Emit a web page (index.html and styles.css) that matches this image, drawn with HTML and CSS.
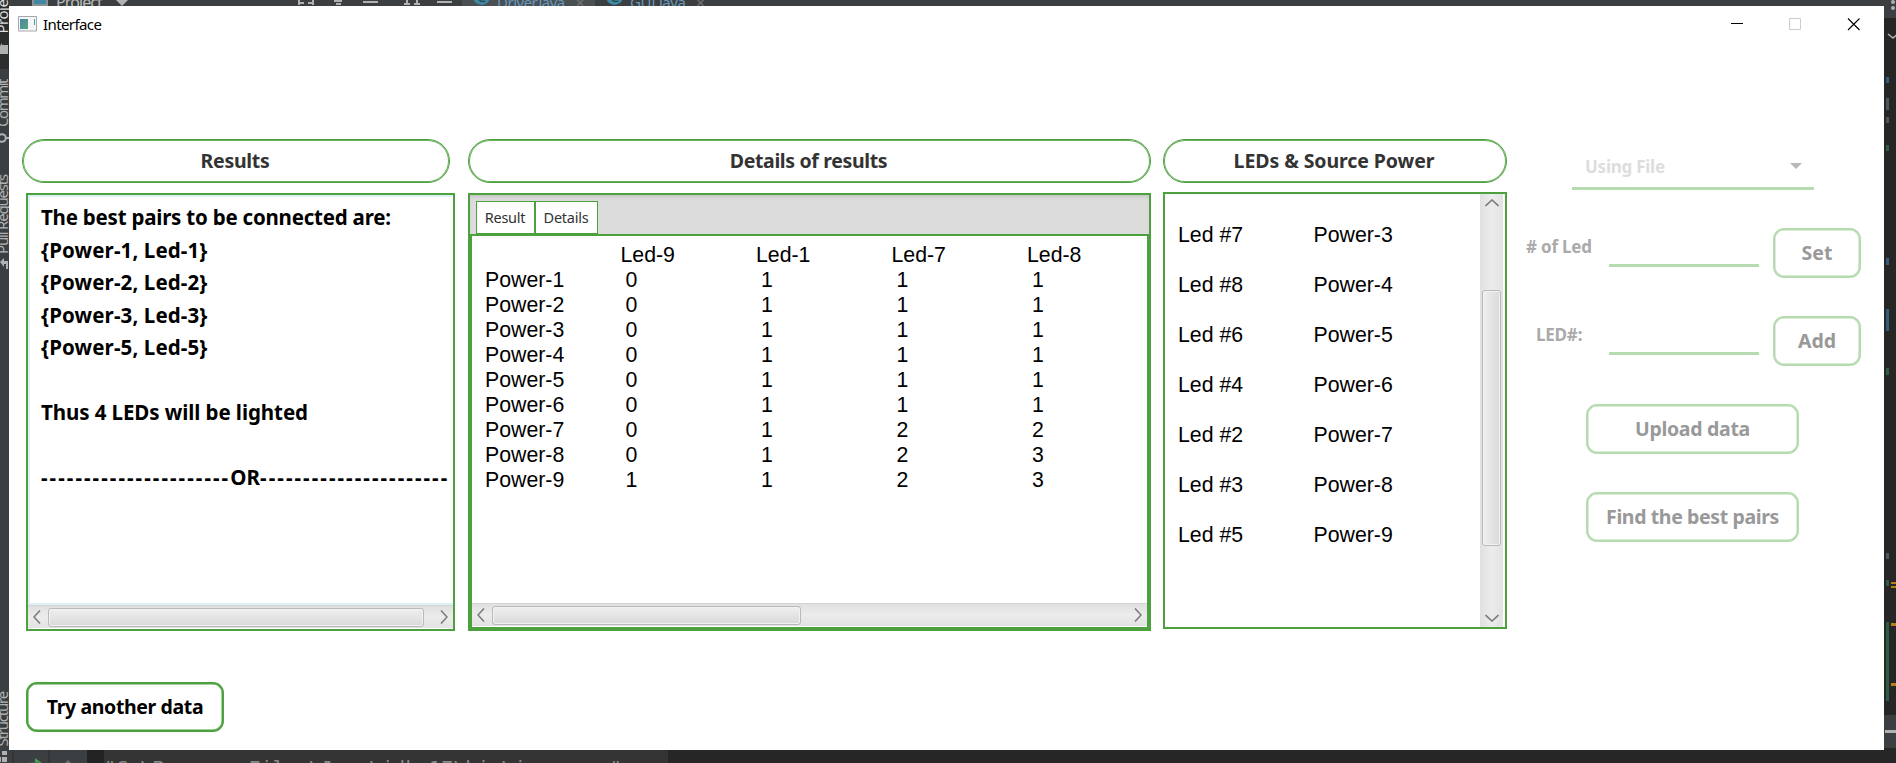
FILE: index.html
```html
<!DOCTYPE html>
<html lang="en">
<head>
<meta charset="utf-8">
<title>Interface</title>
<link rel="stylesheet" href="styles.css">
</head>
<body>
<div class="ide">
  <div class="ide-top">
    <svg class="ide-folder" width="17" height="6" viewBox="0 0 17 6"><path d="M0 0h16v6H0z" fill="#8b9296"/><path d="M2 0h12v4H2z" fill="#3f87a3"/></svg>
    <span class="ide-label project">Project</span>
    <svg width="357" height="6" viewBox="0 0 357 6" class="ide-tools">
      <path d="M11 0h12l-6 6z" fill="#afb1b3"/>
      <path d="M193 3h6M194 0v5M203 3h6M208 0v5M229 1h8M231 4h5M258 2h15M302 0v5M312 0v5M299 4h6M309 4h6M332 2h15" stroke="#afb1b3" stroke-width="2" fill="none"/>
    </svg>
    <div class="ide-tabs">
      <div class="ide-tab active"><i class="dot">C</i><span>Driver.java</span><b>×</b></div>
      <div class="ide-tab"><i class="dot">C</i><span>GUI.java</span><b>×</b></div>
    </div>
  </div>
  <div class="ide-left">
    <span class="v v1">Project</span>
    <span class="v v2">Commit</span>
    <span class="v v3">Pull Requests</span>
    <span class="v v4">Structure</span>
    <svg class="rail" width="9" height="763" viewBox="0 0 9 763">
      <path d="M0 46l2-3v2h6v9H0z" fill="#afb1b3"/>
      <circle cx="2" cy="138" r="3.800" fill="none" stroke="#afb1b3" stroke-width="2"/><path d="M6 138h3" stroke="#afb1b3" stroke-width="2"/>
      <path d="M0 262l4-4v3h4v8H6v-5H4v3z" fill="#afb1b3"/>
    </svg>
  </div>
  <svg class="ide-right" width="12" height="763" viewBox="0 0 12 763">
    <path d="M0 0h12v18H0z" fill="#3c3f41"/>
    <circle cx="9" cy="2" r="2" fill="#afb1b3"/><circle cx="9" cy="8" r="2" fill="#afb1b3"/>
    <path d="M4 34l5 4 5-4" stroke="#afb1b3" stroke-width="1.600" fill="none"/>
    <path d="M2 77h3v6H2zM2 258h3v7H2zM2 309h3v22H2z" fill="#375a7f"/>
    <path d="M2 98h3v12H2zM2 117h3v6H2zM2 553h3v6H2z" fill="#4d565e"/>
    <path d="M2 145h3v6H2zM2 368h3v7H2zM2 580h3v6H2zM2 622h3v79H2z" fill="#315a42"/>
    <path d="M7 582h5v2H7zM7 586h5v2H7zM7 623h5v3H7zM7 683h5v3H7z" fill="#b58016"/>
    <path d="M0 715h12v33H0z" fill="#3c3f41"/><path d="M1 730h11v3H1z" fill="#afb1b3"/>
  </svg>
  <div class="ide-bottom">
    <svg width="104" height="13" viewBox="0 0 104 13"><path d="M0 0h104v13H0z" fill="#3c3f41"/><path d="M13 0v13M49 0v13" stroke="#2b2b2b"/><path d="M2 1h5v4H2zM2 7h5v5H2zM0 7h1v5H0z" fill="#afb1b3"/><path d="M28 12h7V8l7 5z" fill="#499c54"/><path d="M65 13l3-3 3 3z" fill="#6e7072"/><path d="M87 0h17v13H87z" fill="#232323"/></svg>
    <span class="console">"C:\Program Files\Java\jdk-17\bin\java.exe"</span>
  </div>
</div>

<main class="window">
  <header class="titlebar">
    <svg width="19" height="16" viewBox="0 0 19 16"><path d="M.5.5h18v14.500H.5z" fill="#f4f5f6" stroke="#a3a8ac"/><defs><linearGradient id="g" x2="1" y2="1"><stop stop-color="#4c86a4"/><stop offset="1" stop-color="#56a77b"/></linearGradient></defs><path d="M2 3h8v10H2z" fill="url(#g)"/><path d="M16 3h1v6h-1z" fill="#4aa392"/></svg>
    <span class="title">Interface</span>
    <svg class="winbtns" width="130" height="13" viewBox="0 0 130 13"><path d="M0 5.500h12" stroke="#000"/><path d="M58.500.5h11v11h-11z" fill="none" stroke="#ccc"/><path d="M117 .5l11.500 11.500M128.500 .5L117 12" stroke="#000" stroke-width="1.100"/></svg>
  </header>

  <div class="content">
    <section class="col results">
      <h2 class="pill"><span class="t-res">Results</span></h2>
      <div class="box result-box">
        <div class="text-area"><p class="l1">The best pairs to be connected are:</p><p>{Power-1, Led-1}</p><p>{Power-2, Led-2}</p><p>{Power-3, Led-3}</p><p>{Power-5, Led-5}</p><p>&nbsp;</p><p class="l2">Thus 4 LEDs will be lighted</p><p>&nbsp;</p><p class="or"><span>----------------------</span>OR<span>----------------------</span></p></div>
        <div class="hbar"><svg width="8" height="14" viewBox="0 0 8 14"><path d="M7 .5L1 7l6 6.500"/></svg><i class="thumb wide"></i><svg class="end" width="8" height="14" viewBox="0 0 8 14"><path d="M1 .5L7 7l-6 6.500"/></svg></div>
      </div>
    </section>

    <section class="col details">
      <h2 class="pill"><span class="t-det">Details of results</span></h2>
      <div class="box tab-box">
        <nav class="tabs"><span class="tab"><span>Result</span></span><span class="tab second"><span>Details</span></span></nav>
        <div class="pane">
          <div class="matrix">
            <div class="row head"><span></span><span>Led-9</span><span>Led-1</span><span>Led-7</span><span>Led-8</span></div>
            <div class="row"><span>Power-1</span><span>0</span><span>1</span><span>1</span><span>1</span></div>
            <div class="row"><span>Power-2</span><span>0</span><span>1</span><span>1</span><span>1</span></div>
            <div class="row"><span>Power-3</span><span>0</span><span>1</span><span>1</span><span>1</span></div>
            <div class="row"><span>Power-4</span><span>0</span><span>1</span><span>1</span><span>1</span></div>
            <div class="row"><span>Power-5</span><span>0</span><span>1</span><span>1</span><span>1</span></div>
            <div class="row"><span>Power-6</span><span>0</span><span>1</span><span>1</span><span>1</span></div>
            <div class="row"><span>Power-7</span><span>0</span><span>1</span><span>2</span><span>2</span></div>
            <div class="row"><span>Power-8</span><span>0</span><span>1</span><span>2</span><span>3</span></div>
            <div class="row"><span>Power-9</span><span>1</span><span>1</span><span>2</span><span>3</span></div>
          </div>
          <div class="hbar"><svg width="8" height="14" viewBox="0 0 8 14"><path d="M7 .5L1 7l6 6.500"/></svg><i class="thumb mid"></i><svg class="end" width="8" height="14" viewBox="0 0 8 14"><path d="M1 .5L7 7l-6 6.500"/></svg></div>
        </div>
      </div>
    </section>

    <section class="col leds">
      <h2 class="pill"><span class="t-led">LEDs &amp; Source Power</span></h2>
      <div class="box led-box">
        <div class="pairs">
          <div><span>Led #7</span><span>Power-3</span></div>
          <div><span>Led #8</span><span>Power-4</span></div>
          <div><span>Led #6</span><span>Power-5</span></div>
          <div><span>Led #4</span><span>Power-6</span></div>
          <div><span>Led #2</span><span>Power-7</span></div>
          <div><span>Led #3</span><span>Power-8</span></div>
          <div><span>Led #5</span><span>Power-9</span></div>
        </div>
        <div class="vbar"><svg width="14" height="8" viewBox="0 0 14 8"><path d="M.5 7L7 1l6.500 6"/></svg><i class="vthumb"></i><svg class="vend" width="14" height="8" viewBox="0 0 14 8"><path d="M.5 1L7 7l6.500-6"/></svg></div>
      </div>
    </section>

    <section class="form">
      <div class="select"><span>Using File</span><svg width="12" height="6" viewBox="0 0 12 6"><path d="M0 0h12L6 6z" fill="#b8b8b8"/></svg></div>
      <div class="field"><label class="f1"># of Led</label><div class="input"></div><button class="btn small b-set"><span>Set</span></button></div>
      <div class="field"><label class="f2">LED#:</label><div class="input"></div><button class="btn small b-add"><span>Add</span></button></div>
      <button class="btn wide-btn b-up"><span>Upload data</span></button>
      <button class="btn wide-btn b-find"><span>Find the best pairs</span></button>
    </section>
  </div>
  <button class="btn try"><span>Try another data</span></button>
</main>
</body>
</html>
```
FILE: styles.css
```css
* { box-sizing: border-box; }
body { margin: 0; width: 1896px; height: 763px; overflow: hidden; background: #262626; font-family: "Noto Sans", sans-serif; }
h2, p { margin: 0; }
span, label { white-space: nowrap; }

/* editor visible around the window */
.ide { position: relative; width: 1896px; height: 763px; display: grid; grid-template: 6px 1fr 13px / 9px 1fr 12px; overflow: hidden; }
.ide-top { grid-area: 1 / 1 / 2 / 4; background: #3c3f41; display: flex; height: 6px; overflow: hidden; padding-left: 32px; }
.ide-label { color: #bbb; font-size: 16px; line-height: 20px; margin: -8px 0 0 7px; width: 49px; letter-spacing: -.9px; }
.ide-folder, .ide-tools { flex: none; }
.ide-tabs { display: flex; }
.ide-tab { display: flex; height: 6px; overflow: hidden; width: 133px; padding-left: 11px; color: #6897bb; font-size: 15px; line-height: 20px; letter-spacing: -.5px; }
.ide-tab.active { background: #4a4f52; }
.ide-tab span { margin: -8px 0 0 7px; }
.ide-tab b { margin: -8px 0 0 11px; color: #777; font-weight: 400; }
.dot { width: 17px; height: 17px; flex: none; margin-top: -12px; border-radius: 50%; background: #3f87a3; color: #244; font-size: 14px; line-height: 17px; text-align: center; font-style: normal; }
.ide-left { grid-area: 1 / 1 / 4 / 2; background: linear-gradient(#2b2d2e 69px, #3c3f41 69px); position: relative; overflow: hidden; }
.rail { position: absolute; left: 0; top: 0; }
.v { position: absolute; right: -3px; writing-mode: vertical-rl; transform: rotate(180deg); color: #afb1b3; font-size: 15px; line-height: 19px; letter-spacing: -.5px; }
.v1 { top: -12px; color: #ddd; }
.v2 { top: 80px; letter-spacing: -1.500px; }
.v3 { top: 175px; letter-spacing: -1.200px; }
.v4 { top: 692px; letter-spacing: -1.200px; }
.ide-right { grid-area: 1 / 3 / 4 / 4; background: #262626; }
.ide-bottom { grid-area: 3 / 1 / 4 / 4; background: #262626; display: flex; overflow: hidden; z-index: 1; }
.ide-bottom svg { flex: none; }
.console { width: 564px; background: #343434; color: #8a8a8a; font: 20px/24px "DejaVu Sans Mono", monospace; height: 30px; padding-top: 6px; letter-spacing: 0; }

/* window */
.window { position: absolute; left: 9px; top: 6px; z-index: 2; width: 1875px; height: 744px; background: #fff; overflow: hidden; }
.titlebar { height: 133px; display: flex; align-items: flex-start; padding: 10px 23px 0 9px; }
.title { font-size: 15px; line-height: 20px; margin: -2px 0 0 6px; letter-spacing: -.6px; }
.winbtns { margin: 2px 0 0 auto; }
.content { display: flex; align-items: flex-start; padding-left: 13px; height: 543px; }
.pill { height: 44px; border: 1px solid #4da03e; box-shadow: inset 0 0 0 1px rgba(77, 160, 62, .85); border-radius: 22px; display: flex; align-items: center; justify-content: center; font-size: 19.500px; font-weight: 700; color: #333; line-height: 28px; }
.pill span { margin-left: -2px; }
.t-res { letter-spacing: -.3px; }
.t-det { letter-spacing: -.35px; }
.t-led { letter-spacing: -.08px; }
.box { border: 2px solid #4da03e; background: #fff; margin-top: 10px; height: 438px; }
.results { width: 428px; }
.result-box { width: 429px; margin-left: 4px; display: flex; flex-direction: column; }
.details { width: 683px; margin-left: 18px; }
.leds { width: 344px; margin-left: 12px; }
.led-box { height: 437px; margin-top: 9px; display: flex; }

.text-area { flex: 1; border: 2px solid #def1f8; border-right: 0; padding: 4px 0 0 11px; font-size: 20.500px; font-weight: 700; line-height: 32.500px; white-space: nowrap; overflow: hidden; }
.text-area p { height: 32.500px; letter-spacing: .12px; }
.text-area .l1 { letter-spacing: -.22px; }
.text-area .l2 { letter-spacing: -.08px; }
.or span { letter-spacing: 2.040px; }
.hbar { flex: none; height: 24px; display: flex; align-items: center; background: linear-gradient(#e0e0e0, #ececec 50%, #e2e2e2); border-top: 1px solid #d4d4d4; border-bottom: 1px solid #fff; padding: 0 5px; }
.hbar path, .vbar path { fill: none; stroke: #7c7c7c; stroke-width: 1.600; }
.hbar .end { margin-left: auto; }
.thumb { height: 19px; border: 1px solid #b9b9b9; border-radius: 3px; background: linear-gradient(#efefef, #d9d9d9); box-shadow: inset 0 0 0 1px #f2f2f2; margin-left: 7px; }
.wide { width: 376px; }
.mid { width: 309px; }

.tab-box { background: #dcdcdc; display: flex; flex-direction: column; }
.tabs { height: 39px; padding: 6px 0 0 6px; display: flex; box-shadow: inset 0 3px 4px -2px #bbb; }
.tab { width: 59px; height: 33px; border: 1px solid #4da03e; background: #fff; display: flex; align-items: center; justify-content: center; font-size: 14.500px; color: #333; padding: 0 1px 2px 0; letter-spacing: -.25px; }
.second { width: 63px; }
.pane { flex: 1; border: 2px solid #4da03e; background: #fff; display: flex; flex-direction: column; }
.matrix { flex: 1; padding: 7px 0 0 13px; font: 21.300px/25px "Liberation Sans", sans-serif; }
.row { display: grid; grid-template-columns: 140.500px 135.500px 135.500px 135.500px 1fr; height: 25px; }
.head { margin-left: -5px; }
.pairs { flex: 1; padding: 16px 0 0 13px; font: 21.300px/50px "Liberation Sans", sans-serif; }
.pairs div { display: grid; grid-template-columns: 135.500px 1fr; height: 50px; }
.vbar { width: 23px; margin-right: 2px; background: linear-gradient(90deg, #e0e0e0, #ececec 50%, #e2e2e2); display: flex; flex-direction: column; align-items: center; padding: 5px 0; }
.vthumb { width: 19px; height: 256px; margin-top: 83px; border: 1px solid #b9b9b9; border-radius: 3px; background: linear-gradient(90deg, #efefef, #d9d9d9); box-shadow: inset 0 0 0 1px #f2f2f2; }
.vend { margin-top: auto; }

.form { width: 336px; margin-left: 19px; display: flex; flex-direction: column; }
.select { width: 242px; height: 51px; margin-left: 46px; border-bottom: 3px solid #b7dbb0; display: flex; align-items: center; padding: 7px 12px 0 13px; justify-content: space-between; font-size: 17px; font-weight: 700; color: #ddd; }
.select span { letter-spacing: -.25px; }
.select svg { margin-top: -2px; }
.field { display: flex; height: 50px; margin-top: 38px; }
.field label { width: 83px; font-size: 17px; line-height: 24px; font-weight: 700; color: #aaa; padding-top: 7px; letter-spacing: -.2px; }
.field .f2 { padding-left: 10px; }
.input { width: 150px; height: 39px; border-bottom: 3px solid #b7dbb0; }
.btn { font-family: "Noto Sans", sans-serif; font-size: 19.500px; font-weight: 700; color: #999; border: 2px solid #b7dbb0; box-shadow: inset 0 0 0 .5px #b7dbb0; border-radius: 11px; background: #fff; height: 50px; padding: 0 0 1px; line-height: 28px; }
.small { width: 88px; margin-left: 14px; }
.wide-btn { width: 213px; margin: 38px 0 0 60px; letter-spacing: -.3px; }
.b-find { letter-spacing: -.38px; }
.try { margin-left: 17px; width: 198px; color: #000; border-color: #4da03e; box-shadow: inset 0 0 0 .5px #4da03e; letter-spacing: -.38px; }
```
